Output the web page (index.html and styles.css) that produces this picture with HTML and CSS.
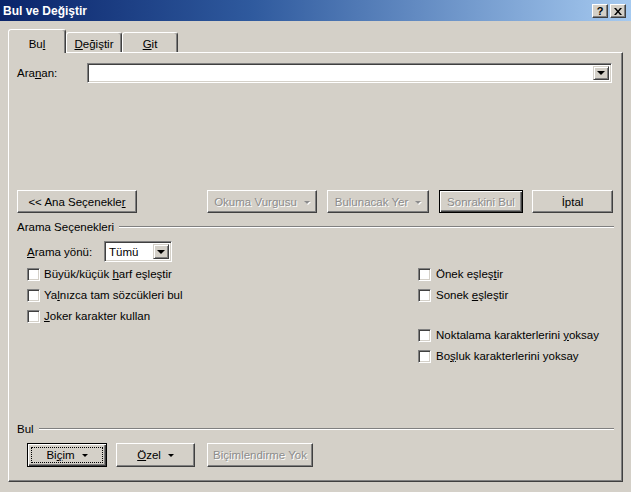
FILE: index.html
```html
<!DOCTYPE html>
<html lang="tr">
<head>
<meta charset="utf-8">
<title>Bul ve Değiştir</title>
<link rel="stylesheet" href="styles.css">
</head>
<body>
<div class="window">
  <div class="titlebar">
    <span class="title">Bul ve Değiştir</span>
    <div class="tb-buttons">
      <span class="tb-btn">?</span>
      <span class="tb-btn"><svg width="8" height="7" viewBox="0 0 8 7"><path d="M0 0h2l2 2.5L6 0h2L5 3.5 8 7H6L4 4.5 2 7H0l3-3.5z" fill="#000"/></svg></span>
    </div>
  </div>
  <div class="client">
    <div class="tabs">
      <div class="tab active">Bu<u>l</u></div>
      <div class="tab"><u>D</u>eğiştir</div>
      <div class="tab"><u>G</u>it</div>
    </div>
    <div class="panel">
      <div class="find-row">
        <span class="find-lbl">Ara<u>n</u>an:</span>
        <div class="combo find-combo">
          <div class="combo-field"></div>
          <span class="drop-btn"><span class="tri"></span></span>
        </div>
      </div>

      <div class="btn-row top-btns">
        <div class="btn b-ana">&lt;&lt; Ana Seçenekle<u>r</u></div>
        <div class="btn disabled b-okuma">Okuma Vurgusu<span class="tri small"></span></div>
        <div class="btn disabled b-bulunacak">Bulunacak Yer<span class="tri small"></span></div>
        <div class="btn default disabled b-sonraki">Sonrakini Bul</div>
        <div class="btn b-iptal">İptal</div>
      </div>

      <div class="group-head head-opts"><span>Arama Seçenekleri</span><span class="etch"></span></div>

      <div class="dir-row">
        <span class="dir-lbl"><u>A</u>rama yönü:</span>
        <div class="combo dir-combo">
          <div class="combo-field">Tümü</div>
          <span class="drop-btn"><span class="tri"></span></span>
        </div>
      </div>

      <div class="options">
        <div class="col col-left">
          <div class="chk"><span class="box"></span><span>Büyük/küçük <u>h</u>arf eşleştir</span></div>
          <div class="chk"><span class="box"></span><span>Ya<u>l</u>nızca tam sözcükleri bul</span></div>
          <div class="chk"><span class="box"></span><span><u>J</u>oker karakter kullan</span></div>
        </div>
        <div class="col col-right">
          <div class="chk"><span class="box"></span><span>Önek eşleş<u>t</u>ir</span></div>
          <div class="chk"><span class="box"></span><span>Sonek <u>e</u>şleştir</span></div>
          <div class="chk gap-above"><span class="box"></span><span>Noktalama karakterlerini <u>y</u>oksay</span></div>
          <div class="chk"><span class="box"></span><span>Bo<u>ş</u>luk karakterlerini yoksay</span></div>
        </div>
      </div>

      <div class="spacer"></div>

      <div class="group-head head-bul"><span>Bul</span><span class="etch"></span></div>

      <div class="btn-row bottom-btns">
        <div class="btn default focus b-bicim">Bi<u>ç</u>im<span class="tri small"></span></div>
        <div class="btn b-ozel"><u>Ö</u>zel<span class="tri small"></span></div>
        <div class="btn disabled b-yok">Biçimlendirme Yok</div>
      </div>
    </div>
  </div>
</div>
</body>
</html>
```

FILE: styles.css
```css
html, body {
  margin: 0;
  padding: 0;
  background: #d4d0c8;
}

.window {
  width: 631px;
  height: 492px;
  background: #d4d0c8;
  font-family: "Liberation Sans", Arial, sans-serif;
  font-size: 11.5px;
  color: #000;
  overflow: hidden;
}

/* Title bar */
.titlebar {
  height: 21px;
  box-sizing: border-box;
  display: flex;
  align-items: center;
  justify-content: space-between;
  padding: 0 5px 0 3px;
  background: linear-gradient(to right, #0a246a 0%, #2f5a9e 40%, #a6caf0 100%);
}

.title {
  color: #fff;
  font-weight: bold;
  font-size: 12px;
}

.tb-buttons {
  display: flex;
  gap: 2px;
  padding-top: 1px;
}

.tb-btn {
  width: 16px;
  height: 14px;
  box-sizing: border-box;
  background: #d4d0c8;
  border: 1px solid;
  border-color: #fff #404040 #404040 #fff;
  box-shadow: inset -1px -1px #808080;
  display: flex;
  align-items: center;
  justify-content: center;
  font-weight: bold;
  font-size: 11px;
  line-height: 1;
}

/* Client area */
.client {
  padding: 8px 0 0 8px;
}

.tabs {
  display: flex;
  align-items: flex-end;
  height: 23px;
}

.tab {
  box-sizing: border-box;
  width: 56px;
  height: 20px;
  border: 1px solid;
  border-bottom: none;
  border-color: #fff #404040 transparent #fff;
  box-shadow: inset -1px 0 #808080;
  border-radius: 3px 3px 0 0;
  display: flex;
  align-items: center;
  justify-content: center;
  padding-top: 2px;
}

.tab.active {
  width: 58px;
  height: 24px;
  margin-bottom: -1px;
  position: relative;
  z-index: 1;
  background: #d4d0c8;
  padding-top: 4px;
}

.panel {
  box-sizing: border-box;
  width: 615px;
  height: 430px;
  border: 1px solid;
  border-color: #fff #404040 #404040 #fff;
  box-shadow: inset -1px -1px #808080;
  padding: 10px 8px 14px 8px;
  display: flex;
  flex-direction: column;
}

/* Find row */
.find-row {
  display: flex;
  align-items: center;
  height: 20px;
}

.find-lbl {
  width: 70px;
}

.combo {
  box-sizing: border-box;
  height: 20px;
  border: 1px solid;
  border-color: #808080 #fff #fff #808080;
  box-shadow: inset 1px 1px #404040, inset -1px -1px #d4d0c8;
  background: #fff;
  display: flex;
  align-items: stretch;
  padding: 2px;
}

.find-combo {
  width: 525px;
}

.combo-field {
  flex: 1;
  display: flex;
  align-items: center;
  padding-left: 2px;
}

.drop-btn {
  box-sizing: border-box;
  width: 16px;
  background: #d4d0c8;
  border: 1px solid;
  border-color: #d4d0c8 #404040 #404040 #d4d0c8;
  box-shadow: inset 1px 1px #fff, inset -1px -1px #808080;
  display: flex;
  align-items: center;
  justify-content: center;
}

.tri {
  width: 0;
  height: 0;
  border-left: 4px solid transparent;
  border-right: 4px solid transparent;
  border-top: 4px solid #000;
}

.tri.small {
  border-left-width: 3px;
  border-right-width: 3px;
  border-top-width: 3px;
  margin-left: 7px;
  margin-top: 1px;
}

/* Buttons */
.btn-row {
  display: flex;
}

.top-btns {
  margin-top: 107px;
}

.btn {
  box-sizing: border-box;
  height: 23px;
  background: #d4d0c8;
  border: 1px solid;
  border-color: #fff #404040 #404040 #fff;
  box-shadow: inset -1px -1px #808080;
  display: flex;
  align-items: center;
  justify-content: center;
  position: relative;
  white-space: nowrap;
}

.btn.default {
  border-color: #000;
  box-shadow: inset 1px 1px #fff, inset -1px -1px #404040, inset -2px -2px #808080;
}

.btn.disabled {
  color: #8c8c8c;
  text-shadow: 1px 1px #fff;
}

.btn.disabled .tri {
  border-top-color: #8c8c8c;
  filter: drop-shadow(1px 1px 0 #fff);
}

.btn.focus::after {
  content: "";
  position: absolute;
  left: 3px;
  top: 3px;
  right: 3px;
  bottom: 3px;
  border: 1px dotted #000;
}

.b-ana { width: 120px; }
.b-okuma { width: 110px; margin-left: 70px; }
.b-bulunacak { width: 102px; margin-left: 10px; }
.b-sonraki { width: 84px; margin-left: 10px; }
.b-iptal { width: 81px; margin-left: 9px; }

/* Group header */
.group-head {
  display: flex;
  align-items: center;
  height: 13px;
}

.etch {
  flex: 1;
  height: 0;
  border-top: 1px solid #808080;
  border-bottom: 1px solid #fff;
  margin-left: 5px;
  margin-top: 1px;
}

.head-opts {
  margin-top: 7px;
}

/* Direction row */
.dir-row {
  display: flex;
  align-items: center;
  height: 21px;
  margin-top: 8px;
  padding-left: 10px;
}

.dir-lbl {
  width: 77px;
}

.dir-combo {
  width: 68px;
  height: 21px;
}

/* Options */
.options {
  display: flex;
  margin-top: 2px;
}

.col {
  display: flex;
  flex-direction: column;
  gap: 1px;
}

.col-left {
  width: 401px;
  box-sizing: border-box;
  padding-left: 10px;
}

.chk {
  display: flex;
  align-items: center;
  gap: 4px;
  height: 20px;
}

.col-right .chk {
  gap: 5px;
}

.chk.gap-above {
  margin-top: 19px;
}

.box {
  box-sizing: border-box;
  width: 13px;
  height: 13px;
  background: #fff;
  border: 1px solid;
  border-color: #808080 #fff #fff #808080;
  box-shadow: inset 1px 1px #404040, inset -1px -1px #d4d0c8;
}

.spacer {
  flex: 1;
}

/* Bottom */
.head-bul {
  margin-bottom: 8px;
}

.bottom-btns .btn {
  height: 24px;
}

.b-bicim { width: 80px; margin-left: 10px; }
.b-ozel { width: 79px; margin-left: 9px; }
.b-yok { width: 106px; margin-left: 12px; }
```
